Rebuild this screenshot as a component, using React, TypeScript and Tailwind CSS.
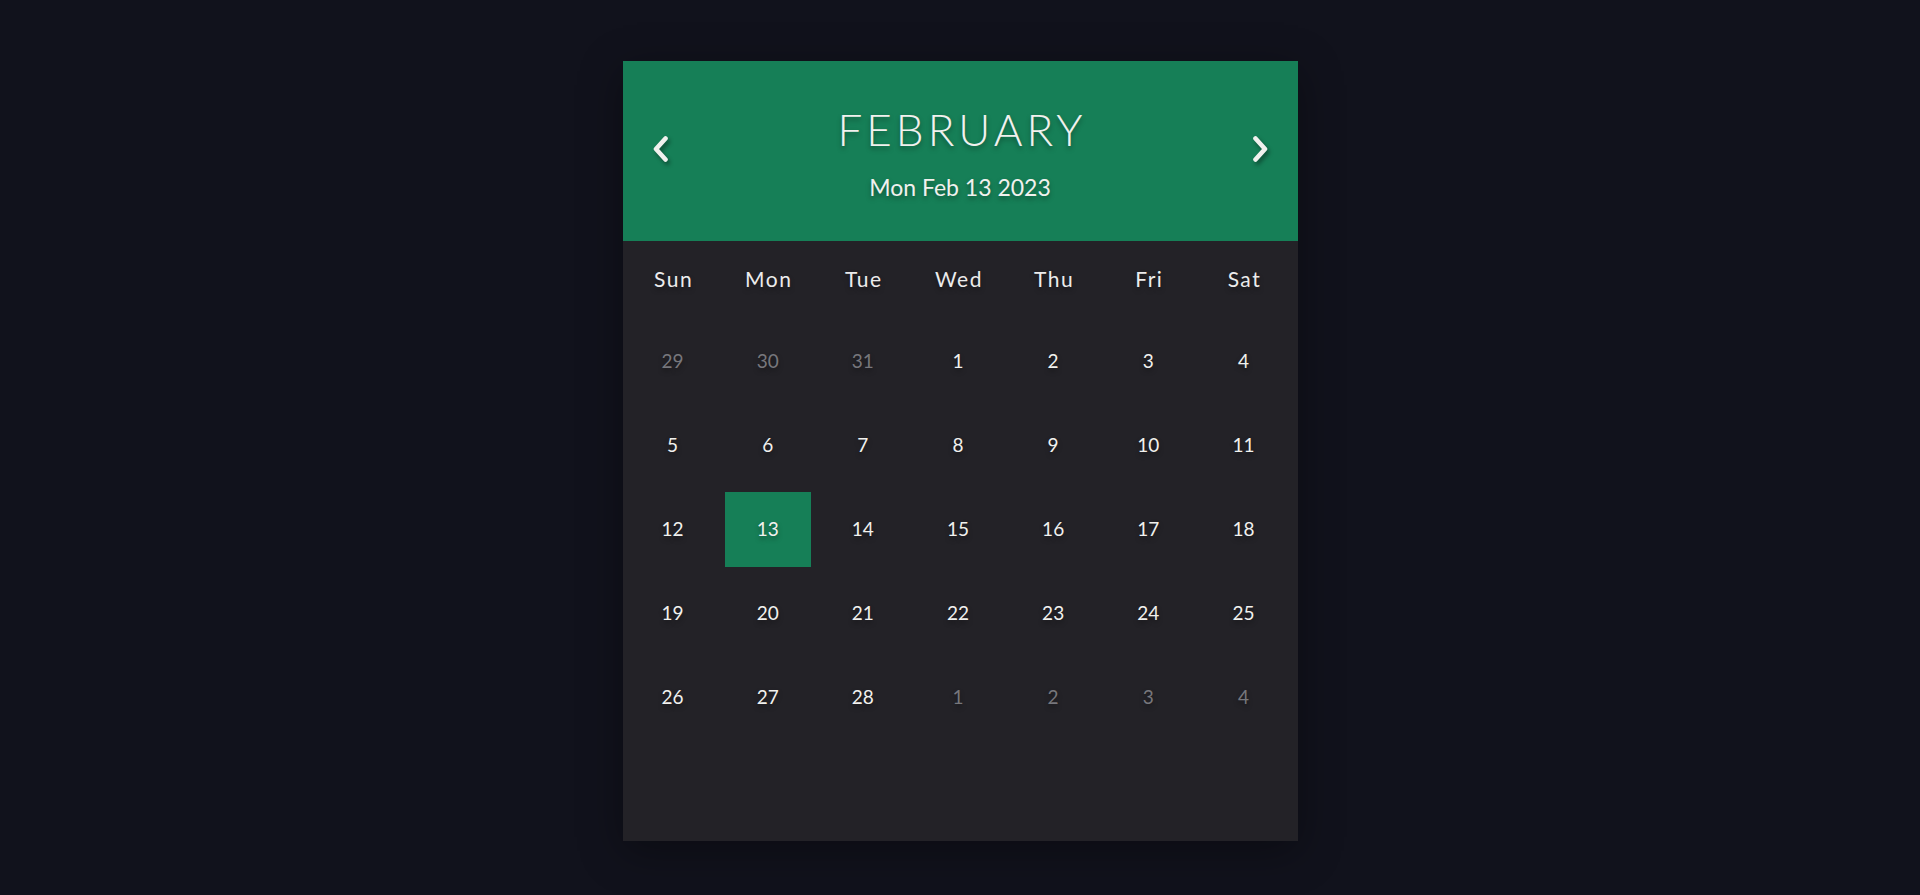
const weekDays = ["Sun", "Mon", "Tue", "Wed", "Thu", "Fri", "Sat"];

type Day = { n: number; muted?: boolean; active?: boolean };

const days: Day[] = [
  { n: 29, muted: true },
  { n: 30, muted: true },
  { n: 31, muted: true },
  ...Array.from({ length: 28 }, (_, i) => ({ n: i + 1, active: i + 1 === 13 })),
  { n: 1, muted: true },
  { n: 2, muted: true },
  { n: 3, muted: true },
  { n: 4, muted: true },
];

const shadow = "[text-shadow:0_3px_5px_rgba(0,0,0,0.35)]";

function Chevron({ dir }: { dir: "left" | "right" }) {
  return (
    <svg
      width="20"
      height="30"
      viewBox="0 0 20 30"
      fill="none"
      stroke="currentColor"
      strokeWidth="4.6"
      strokeLinecap="round"
      strokeLinejoin="round"
      className="drop-shadow-[2px_3px_2px_rgba(0,0,0,0.4)]"
    >
      <polyline points={dir === "left" ? "14.5,4.5 5,15 14.5,25.5" : "5.5,4.5 15,15 5.5,25.5"} />
    </svg>
  );
}

export default function App() {
  return (
    <div
      className="min-h-[895px] bg-[#11121c] flex justify-center pt-[61px]"
      style={{ fontFamily: "Lato, 'Open Sans', sans-serif" }}
    >
      <div className="w-[675px] h-[780px] bg-[#232227] shadow-[0_10px_40px_rgba(0,0,0,0.35)] flex flex-col">
        {/* header */}
        <div className="h-[180px] bg-[#167f57] flex items-center px-[28px] text-[#f1f1ee]">
          <button className="mb-1">
            <Chevron dir="left" />
          </button>
          <div className="flex-1 flex flex-col items-center self-start pt-[46px]">
            <h1 className={`text-[44px] leading-[44px] font-light tracking-[4px] pl-[4px] ${shadow}`}>
              FEBRUARY
            </h1>
            <p className={`mt-[25px] text-[23px] leading-[22px] ${shadow}`}>Mon Feb 13 2023</p>
          </div>
          <button className="mb-1">
            <Chevron dir="right" />
          </button>
        </div>

        {/* week days */}
        <div className="grid grid-cols-7 gap-x-[9px] pl-[7px] pr-[11px] h-[76px] items-center text-[#ececec]">
          {weekDays.map((d) => (
            <div key={d} className={`text-center text-[21px] tracking-[1.5px] pl-[2px] ${shadow}`}>
              {d}
            </div>
          ))}
        </div>

        {/* days */}
        <div className="mt-[7px] grid grid-cols-7 auto-rows-[75px] gap-x-[9px] gap-y-[9px] pl-[7px] pr-[11px]">
          {days.map((d, i) => (
            <div
              key={i}
              className={`flex items-center justify-center text-[19px] ${shadow} ${
                d.active ? "bg-[#167f57] text-[#f1f1ee]" : d.muted ? "text-[#77777c]" : "text-[#f1f1ee]"
              }`}
            >
              {d.n}
            </div>
          ))}
        </div>
      </div>
    </div>
  );
}
